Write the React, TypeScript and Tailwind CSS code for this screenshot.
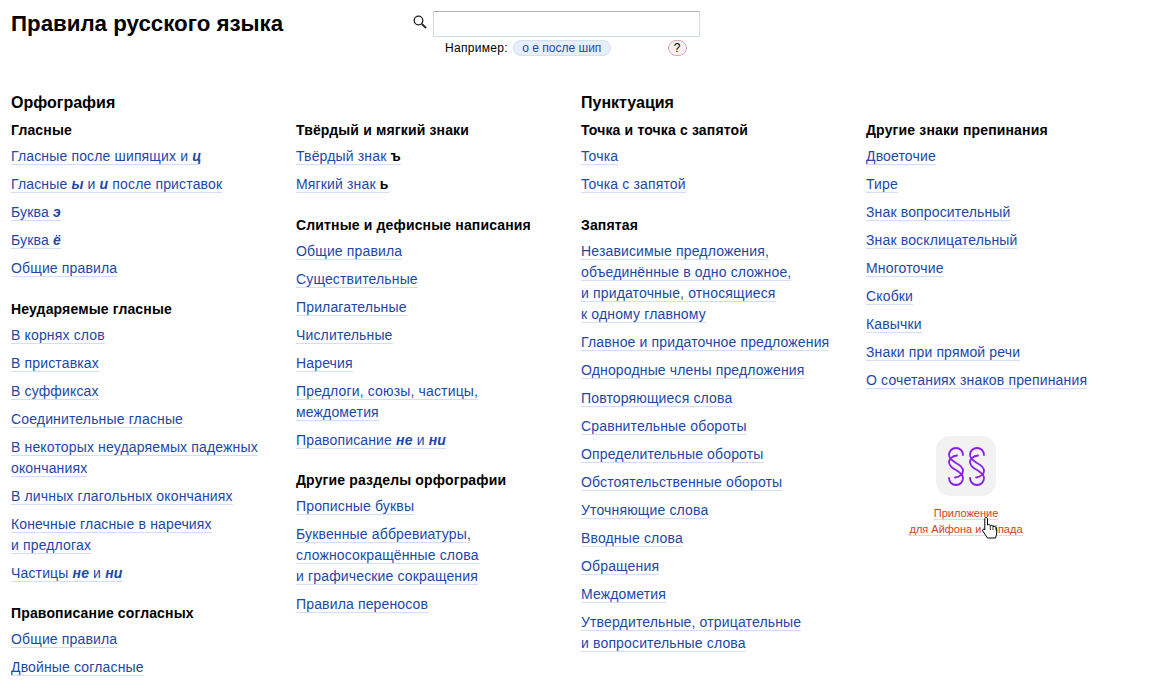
import React from 'react';

type Group = { title: string; links: React.ReactNode[] };
type Column = { heading?: string; groups: Group[] };

const Em = ({ children }: { children: React.ReactNode }) => <b className="italic font-bold">{children}</b>;

const columns: Column[] = [
    {
        heading: "Орфография",
        groups: [
            {
                title: "Гласные",
                links: [
                    <>Гласные после шипящих и <Em>ц</Em></>,
                    <>Гласные <Em>ы</Em> и <Em>и</Em> после приставок</>,
                    <>Буква <Em>э</Em></>,
                    <>Буква <Em>ё</Em></>,
                    "Общие правила",
                ],
            },
            {
                title: "Неударяемые гласные",
                links: [
                    "В корнях слов",
                    "В приставках",
                    "В суффиксах",
                    "Соединительные гласные",
                    <>В некоторых неударяемых падежных<br />окончаниях</>,
                    "В личных глагольных окончаниях",
                    <>Конечные гласные в наречиях<br />и предлогах</>,
                    <>Частицы <Em>не</Em> и <Em>ни</Em></>,
                ],
            },
            {
                title: "Правописание согласных",
                links: ["Общие правила", "Двойные согласные"],
            },
        ],
    },
    {
        groups: [
            {
                title: "Твёрдый и мягкий знаки",
                links: [
                    <>Твёрдый знак <b className="text-black">ъ</b></>,
                    <>Мягкий знак <b className="text-black">ь</b></>,
                ],
            },
            {
                title: "Слитные и дефисные написания",
                links: [
                    "Общие правила",
                    "Существительные",
                    "Прилагательные",
                    "Числительные",
                    "Наречия",
                    <>Предлоги, союзы, частицы,<br />междометия</>,
                    <>Правописание <Em>не</Em> и <Em>ни</Em></>,
                ],
            },
            {
                title: "Другие разделы орфографии",
                links: [
                    "Прописные буквы",
                    <>Буквенные аббревиатуры,<br />сложносокращённые слова<br />и графические сокращения</>,
                    "Правила переносов",
                ],
            },
        ],
    },
    {
        heading: "Пунктуация",
        groups: [
            {
                title: "Точка и точка с запятой",
                links: ["Точка", "Точка с запятой"],
            },
            {
                title: "Запятая",
                links: [
                    <>Независимые предложения,<br />объединённые в одно сложное,<br />и придаточные, относящиеся<br />к одному главному</>,
                    "Главное и придаточное предложения",
                    "Однородные члены предложения",
                    "Повторяющиеся слова",
                    "Сравнительные обороты",
                    "Определительные обороты",
                    "Обстоятельственные обороты",
                    "Уточняющие слова",
                    "Вводные слова",
                    "Обращения",
                    "Междометия",
                    <>Утвердительные, отрицательные<br />и вопросительные слова</>,
                ],
            },
        ],
    },
    {
        groups: [
            {
                title: "Другие знаки препинания",
                links: [
                    "Двоеточие",
                    "Тире",
                    "Знак вопросительный",
                    "Знак восклицательный",
                    "Многоточие",
                    "Скобки",
                    "Кавычки",
                    "Знаки при прямой речи",
                    "О сочетаниях знаков препинания",
                ],
            },
        ],
    },
];

const HandCursor = () => (
    <svg width="17" height="22" viewBox="0 0 17 22" className="absolute left-[71px] top-[81px]">
        <path
            d="M4 .5C5 .5 5.500 1.200 5.500 2V8C6.500 7.300 8 7.500 8.300 8.500 9.300 8 10.800 8.300 11 9.500 12 9 14 9.500 14.300 11 15 14 15 17 13.500 21H5.500L.8 14C0 12.500 1.500 11.500 2.500 12.500L2.800 13V2C2.800 1.200 3.200.5 4 .5Z"
            fill="#fff"
            stroke="#000"
            strokeWidth="1"
            strokeLinejoin="round"
        />
        <path d="M8.300 8.500V13M11 9.500V13M14 11V13.500" stroke="#000" strokeWidth="0.8" fill="none" />
    </svg>
);

const Paragraph = () => (
    <svg width="18" height="39" viewBox="0 0 18 39" fill="none" stroke="#8a1fe8" strokeWidth="1.800" strokeLinecap="round">
        <path d="M16 8C16 4 13 1 9 1 5 1 2 4 2 8 2 12 6 14 9 16 13 18 16 21 16 24 16 27 13 30 8 30.500" />
        <path d="M2 31C2 35 5 38 9 38 13 38 16 35 16 31 16 27 12 25 9 23 5 21 2 18 2 15 2 12 5 9 10 8.500" />
    </svg>
);

const AppPromo = () => (
    <div className="relative mt-[45.4px] ml-[45px] w-[110px] flex flex-col items-center text-[11px] leading-[16px] tracking-normal text-[#d0431a] text-center">
        <div className="w-[60px] h-[60px] rounded-[14px] bg-[#f2f2f2] flex items-center justify-center gap-[3px]">
            <Paragraph />
            <Paragraph />
        </div>
        <div className="mt-[9px] whitespace-nowrap">
            <span className="border-b border-[#f5d6c8]">Приложение</span>
            <br />
            <span className="border-b border-[#f5d6c8]">для Айфона и Айпада</span>
        </div>
        <HandCursor />
    </div>
);

export default function App() {
    return (
        <div className="h-[695px] overflow-hidden bg-white text-black font-['Liberation_Sans',Arial,sans-serif] text-[14px] leading-[21px] tracking-[0.15px]">
            <header className="flex h-[94px] pl-[11px]">
                <h1 className="w-[402px] pt-[11px] text-[22.3px] leading-[26px] font-bold tracking-normal">Правила русского языка</h1>
                <div className="pt-[11px]">
                    <div className="flex items-start">
                        <svg width="14" height="14" viewBox="0 0 14 14" fill="none" stroke="#222" className="mt-[4px] mr-[6px]">
                            <circle cx="5.500" cy="5.500" r="4.300" strokeWidth="1.300" />
                            <path d="M8.800 8.800 13 13" strokeWidth="1.800" />
                        </svg>
                        <input className="w-[267px] h-[26px] border border-[#d5dbe3] border-t-[#b0b0b0] bg-white rounded-[1px] outline-none" />
                    </div>
                    <div className="flex items-center h-[18px] pl-[32px] mt-[2px] text-[12px] leading-[16px] tracking-[0.3px]">
                        <span>Например:</span>
                        <span className="ml-[5px] w-[98px] h-[16px] rounded-[8px] bg-[#e6eef9] border border-[#d5e0f0] text-[#1c48a8] flex items-center justify-center tracking-normal">о е после шип</span>
                        <span className="ml-[57px] w-[19px] h-[16px] rounded-[8px] bg-[#f5f0f3] border border-[#d8a8b4] flex items-center justify-center">?</span>
                    </div>
                </div>
            </header>
            <main className="grid grid-cols-[285px_285px_285px_285px] pl-[11px]">
                {columns.map((column, index) => (
                    <section key={index} className="min-w-0">
                        <h2 className={`text-[16px] leading-[18px] font-bold tracking-normal ${column.heading ? '' : 'invisible'}`}>{column.heading ?? 'x'}</h2>
                        <div className="mt-[9px]">
                            {column.groups.map((group, groupIndex) => (
                                <div key={groupIndex} className="mb-[20.6px]">
                                    <h3 className="font-bold text-[14px] leading-[18px] mb-[7px]">{group.title}</h3>
                                    <ul className="flex flex-col gap-[7px]">
                                        {group.links.map((link, linkIndex) => (
                                            <li key={linkIndex}>
                                                <a href="#" className="text-[#1c48a8] border-b border-[#d2def4]">{link}</a>
                                            </li>
                                        ))}
                                    </ul>
                                </div>
                            ))}
                        </div>
                        {index === 3 && <AppPromo />}
                    </section>
                ))}
            </main>
        </div>
    );
}
